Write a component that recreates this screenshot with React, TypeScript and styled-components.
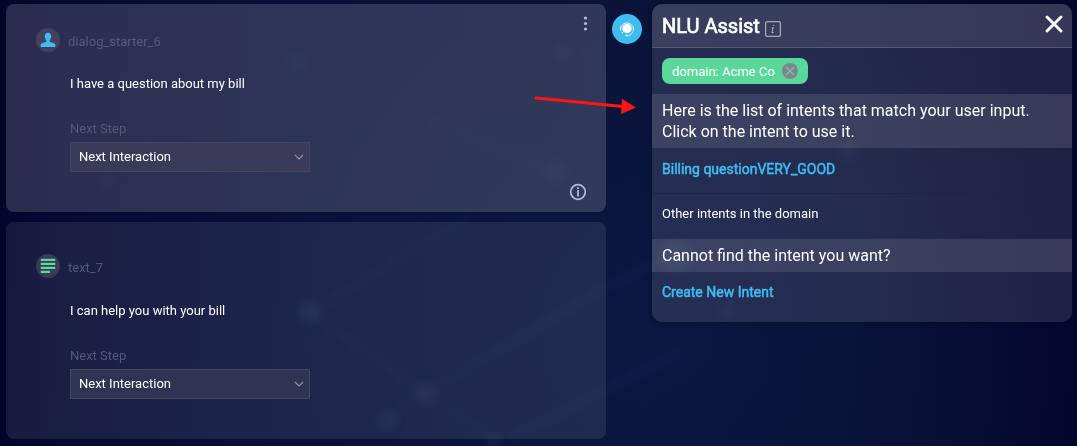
import React from 'react';
import styled, { createGlobalStyle } from 'styled-components';

const GlobalStyle = createGlobalStyle`
  * { box-sizing: border-box; }
  body {
    margin: 0;
    overflow: hidden;
    background: #060c33;
    font-family: Roboto, "Liberation Sans", sans-serif;
    font-size: 13px;
    color: #fff;
  }
  h2, p { margin: 0; font-weight: 400; }
  button { font: inherit; color: inherit; background: none; border: 0; padding: 0; }
`;

const Page = styled.main`
  position: relative;
  width: 1077px;
  height: 446px;
  display: flex;
  align-items: flex-start;
  padding: 4px 5px 0 6px;
  background:
    radial-gradient(ellipse 420px 420px at 660px 330px, rgba(14, 29, 76, 0.55), transparent 100%),
    linear-gradient(90deg, #02052b 0, #040a32 60px, #081038 300px, #091237 640px, #071033 850px, #04062d 1077px);
`;

const Backdrop = styled.svg`
  position: absolute;
  inset: 0;
  pointer-events: none;
`;

const Dialog = styled.section`
  position: relative;
  width: 600px;
  display: flex;
  flex-direction: column;
  gap: 10px;
`;

const Card = styled.article<{ $active?: boolean }>`
  display: flex;
  justify-content: space-between;
  height: ${p => (p.$active ? 208 : 217)}px;
  padding: ${p => (p.$active ? 24 : 32)}px 16px 10px 30px;
  border-radius: 8px;
  background: ${p => (p.$active
    ? 'linear-gradient(100deg, rgba(106, 100, 126, 0.4), rgba(102, 108, 136, 0.4) 50%, rgba(108, 112, 136, 0.4))'
    : 'linear-gradient(100deg, rgba(112, 110, 130, 0.2), rgba(116, 122, 160, 0.2) 50%, rgba(118, 126, 142, 0.2))')};
`;

const Step = styled.div`
  width: 280px;
`;

const StepHeader = styled.header`
  display: flex;
  align-items: center;
  height: 24px;
  gap: 8px;
`;

const Avatar = styled.span`
  width: 24px;
  height: 24px;
  border-radius: 50%;
  background: rgba(90, 87, 111, 0.5);
  svg { display: block; }
`;

const StepName = styled.span`
  padding-top: 3px;
  color: #555b80;
`;

const StepBody = styled.div<{ $top: number }>`
  margin-left: 34px;
  padding-top: ${p => p.$top}px;
`;

const Message = styled.p`
  line-height: 16px;
`;

const FieldLabel = styled.p`
  margin-top: 29px;
  color: #555a7d;
  line-height: 16px;
`;

const Select = styled.button<{ $active?: boolean }>`
  display: flex;
  align-items: center;
  justify-content: space-between;
  width: 240px;
  height: 30px;
  margin-top: 5px;
  padding: 0 5px 2px 8px;
  border: 1px solid ${p => (p.$active ? '#464461' : '#454660')};
  background: ${p => (p.$active ? '#3a3b59' : '#303452')};
  svg { margin-top: 1px; }
`;

const Actions = styled.div`
  display: flex;
  flex-direction: column;
  justify-content: space-between;
  align-items: flex-end;
  margin-top: -14px;
  padding-bottom: 1px;
`;

const AssistButton = styled.button`
  position: relative;
  width: 30px;
  height: 30px;
  margin: 10px 10px 0 6px;
  border-radius: 50%;
  background: #3fbdf1;
  svg { display: block; }
`;

const Panel = styled.aside`
  position: relative;
  width: 420px;
  height: 318px;
  overflow: hidden;
  border-radius: 10px;
  background: linear-gradient(90deg, rgba(107, 108, 137, 0.28), rgba(107, 108, 135, 0.27));
  box-shadow: 0 1px 5px rgba(0, 0, 20, 0.35);
`;

const PanelHeader = styled.header`
  display: flex;
  align-items: center;
  height: 44px;
  padding: 0 9px 0 10px;
  border-bottom: 1px solid #555a73;
  background: rgba(130, 125, 148, 0.23);
`;

const PanelTitle = styled.h2`
  flex: 1;
  display: flex;
  align-items: center;
  gap: 5px;
  font-size: 20px;
  line-height: 24px;
  -webkit-text-stroke: 0.7px #fff;
  svg { margin-top: 6px; }
`;

const CloseButton = styled.button`
  display: flex;
  margin-top: -4px;
`;

const ChipRow = styled.div`
  display: flex;
  height: 46px;
  padding: 10px;
`;

const Chip = styled.span`
  display: flex;
  align-items: center;
  justify-content: space-between;
  width: 146px;
  height: 26px;
  padding: 0 10px;
  border-radius: 8px;
  background: #59d899;
`;

const Band = styled.p`
  padding: 6px 10px;
  background: rgba(130, 130, 148, 0.25);
  font-size: 16px;
  line-height: 21px;
`;

const Row = styled.div<{ $height: number; $top?: number; $divided?: boolean }>`
  height: ${p => p.$height}px;
  padding: ${p => p.$top ?? 12}px 10px 0;
  line-height: 18px;
  border-bottom: ${p => (p.$divided ? '1px solid #1e2442' : '0')};
`;

const IntentLink = styled.button`
  color: #3fbdf1;
  font-size: 14px;
  line-height: 18px;
  -webkit-text-stroke: 0.5px #3fbdf1;
`;

const Pointer = styled.svg`
  position: absolute;
  left: 530px;
  top: 90px;
`;

const PersonIcon = () => (
  <svg width="24" height="24" viewBox="0 0 24 24">
    <path fill="#3fbdf1" d="M12 4.800c2.100 0 3.200 1.300 3.200 3.400 0 1.700-.7 3-1.600 4v1.600l3.900 1.200c1.200.4 1.800 1.200 1.800 2.400V19H4.700v-1.600c0-1.200.6-2 1.800-2.400l3.900-1.200v-1.600C9.500 11.200 8.800 9.900 8.800 8.200 8.800 6.100 9.900 4.800 12 4.800z" />
  </svg>
);

const TextIcon = () => (
  <svg width="24" height="24" viewBox="0 0 24 24">
    <path fill="#59d899" d="M4.800 4.700h14.500v2.300H4.800zM4.800 8.700h14.500v2.300H4.800zM4.800 12.700h14.500v2.300H4.800zM4.800 16.700h9.200v2.300H4.800z" />
  </svg>
);

const Chevron = () => (
  <svg width="10" height="8" viewBox="0 0 10 8">
    <path d="M1 2l4 4 4-4" fill="none" stroke="#92949b" strokeWidth="1.2" />
  </svg>
);

const KebabIcon = () => (
  <svg width="9" height="18" viewBox="0 0 9 18" fill="#b9bfd3">
    <circle cx="4.500" cy="4" r="1.600" />
    <circle cx="4.500" cy="9.500" r="1.600" />
    <circle cx="4.500" cy="15" r="1.600" />
  </svg>
);

const InfoIcon = () => (
  <svg width="21" height="18" viewBox="0 0 21 18">
    <circle cx="9" cy="9" r="7.300" fill="none" stroke="#b4bdd5" strokeWidth="1.700" />
    <path fill="#b4bdd5" d="M8.100 4.300h1.800v1.600H8.100zM8.100 7h1.800v6.500H8.100z" />
  </svg>
);

const HeadsetIcon = () => (
  <svg width="30" height="30" viewBox="0 0 30 30">
    <circle cx="15" cy="14.500" r="4.700" fill="#fff" />
    <path d="M9.200 12.500a6.400 6.400 0 0 1 11.600 0M20.800 17.500c-.7 2.200-2.300 3.600-4.500 4" fill="none" stroke="#fff" strokeWidth=".8" />
    <path d="M8.700 12.500v4M21.300 12.500v4M10 17.800l1 1.500" stroke="#fff" strokeWidth="1.100" />
    <rect x="13.300" y="20.700" width="3.200" height="1.500" rx=".7" fill="#fff" />
  </svg>
);

const TitleInfo = () => (
  <svg width="16" height="16" viewBox="0 0 16 16">
    <rect x=".6" y=".6" width="14.800" height="14.800" rx="1.800" fill="none" stroke="#a5a6ae" strokeWidth="1.300" />
    <path d="M8.700 3.900l-.2 1.100M6.600 7l1.500-.3-1 4.500c-.1.700.6.700 1.500.1" fill="none" stroke="#a5a6ae" strokeWidth="1.100" />
  </svg>
);

const CloseIcon = () => (
  <svg width="18" height="18" viewBox="0 0 18 18">
    <path d="M2 2l14 14M16 2L2 16" stroke="#fff" strokeWidth="2.900" strokeLinecap="round" />
  </svg>
);

const RemoveIcon = () => (
  <svg width="16" height="16" viewBox="0 0 16 16">
    <circle cx="8" cy="8" r="8" fill="#83838f" />
    <path d="M4 4l8 8M12 4l-8 8" stroke="#59d899" strokeWidth="1.200" />
  </svg>
);

const glows = [
  [298, 62, 10, '#268aa0', 0.07], [310, 312, 11, '#24a0a8', 0.11], [563, 53, 9, '#8a70a0', 0.05],
  [425, 393, 11, '#8b91c0', 0.07], [387, 421, 11, '#2779a0', 0.09], [556, 172, 13, '#8997bd', 0.05],
  [848, 151, 10, '#8d7cad', 0.07], [675, 256, 16, '#6ba0b5', 0.1], [727, 310, 8, '#8078a0', 0.08],
  [493, 440, 8, '#8b91c0', 0.07], [108, 181, 8, '#2779a0', 0.08],
] as const;

const Network = () => (
  <Backdrop width="1077" height="446" viewBox="0 0 1077 446">
    <defs>
      <filter id="soft" x="-50%" y="-50%" width="200%" height="200%"><feGaussianBlur stdDeviation="4" /></filter>
    </defs>
    <g filter="url(#soft)" stroke="#6f83b5" strokeOpacity=".03" strokeWidth="9" fill="none">
      <path d="M310 312L470 217M310 312L425 393L610 285L680 253M425 393L500 443L680 352M387 421L425 393M430 120L556 172" />
    </g>
    <g filter="url(#soft)">
      {glows.map(([x, y, r, c, o]) => <circle key={`${x}-${y}`} cx={x} cy={y} r={r} fill={c} opacity={o} />)}
    </g>
  </Backdrop>
);

interface StepCardProps {
  name: string;
  message: string;
  icon: React.ReactNode;
  active?: boolean;
}

const StepCard = ({ name, message, icon, active }: StepCardProps) => (
  <Card $active={active}>
    <Step>
      <StepHeader>
        <Avatar>{icon}</Avatar>
        <StepName>{name}</StepName>
      </StepHeader>
      <StepBody $top={active ? 24 : 25}>
        <Message>{message}</Message>
        <FieldLabel>Next Step</FieldLabel>
        <Select $active={active}>Next Interaction<Chevron /></Select>
      </StepBody>
    </Step>
    {active && (
      <Actions>
        <KebabIcon />
        <InfoIcon />
      </Actions>
    )}
  </Card>
);

export default function App() {
  return (
    <>
      <GlobalStyle />
      <Page>
        <Network />
        <Dialog>
          <StepCard active name="dialog_starter_6" message="I have a question about my bill" icon={<PersonIcon />} />
          <StepCard name="text_7" message="I can help you with your bill" icon={<TextIcon />} />
        </Dialog>
        <AssistButton aria-label="Assist"><HeadsetIcon /></AssistButton>
        <Panel>
          <PanelHeader>
            <PanelTitle>NLU Assist<TitleInfo /></PanelTitle>
            <CloseButton aria-label="Close"><CloseIcon /></CloseButton>
          </PanelHeader>
          <ChipRow><Chip>domain: Acme Co<RemoveIcon /></Chip></ChipRow>
          <Band>Here is the list of intents that match your user input.<br />Click on the intent to use it.</Band>
          <Row $height={46} $divided><IntentLink>Billing questionVERY_GOOD</IntentLink></Row>
          <Row $height={45} $top={11}>Other intents in the domain</Row>
          <Band>Cannot find the intent you want?</Band>
          <Row $height={50} $top={11}><IntentLink>Create New Intent</IntentLink></Row>
        </Panel>
        <Pointer width="110" height="30" viewBox="0 0 110 30">
          <path d="M6 8L93 16.500" stroke="#ff1414" strokeWidth="3" strokeLinecap="round" />
          <path d="M92 9L106 17.500L91 24z" fill="#ff1414" />
        </Pointer>
      </Page>
    </>
  );
}
